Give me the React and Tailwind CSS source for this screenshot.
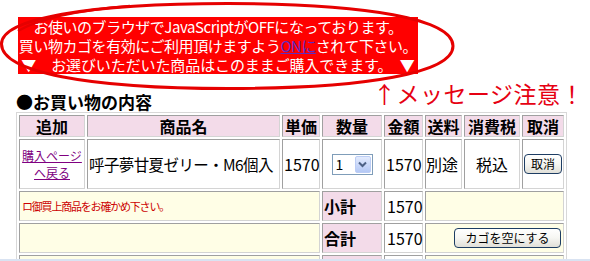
import React from "react";

const F = "font-['Noto_Sans_CJK_JP',sans-serif]";
const cell = "border border-t-[#a0a0a0] border-l-[#a0a0a0] border-r-[#d4d4d4] border-b-[#d4d4d4]";
const head = `${cell} bg-[#f3dbe9] font-bold text-[16px] leading-[20px] flex items-center justify-center whitespace-nowrap`;
const body = `${cell} bg-white text-[16px] leading-[20px] flex items-center whitespace-nowrap`;
const yellow = `${cell} bg-[#fffee6]`;

function XPButton({ children, className = "" }) {
  return (
    <button
      className={`border border-[#1d3d63] rounded-[4px] bg-linear-to-b from-white via-[#f6f6f2] to-[#e0dfd8] text-[12px] leading-[16px] text-black ${className}`}
    >
      {children}
    </button>
  );
}

export default function App() {
  return (
    <div className={`${F} relative w-[590px] h-[261px] overflow-hidden bg-white text-black flex flex-col`}>
      <div className="flex-1 overflow-hidden">
        {/* red notice */}
        <div className="mt-[17px] ml-[18px] w-[400px] h-[57px] bg-[#ff0000] text-white text-[15px] leading-[19px] text-center whitespace-nowrap tracking-[-0.45px]">
          <div>お使いのブラウザでJavaScriptがOFFになっております。</div>
          <div>
            買い物カゴを有効にご利用頂けますよう
            <span className="text-[#5e2bc4] underline">ONに</span>
            されて下さい。
          </div>
          <div className="tracking-[-0.1px]">▼　お選びいただいた商品はこのままご購入できます。　▼</div>
        </div>

        {/* heading row */}
        <div className="h-[38px] flex items-start justify-between pl-[16px] pr-[6px]">
          <div className="mt-[18px] text-[17px] leading-[20px] font-bold">●お買い物の内容</div>
          <div className="mt-[6px] text-[23px] leading-[26px] text-[#e60012] tracking-[0.5px]">↑メッセージ注意！</div>
        </div>

        {/* table */}
        <div className="ml-[16px] w-[551px] border border-[#d8d8d8] p-[2px]">
          <div className="grid grid-cols-[66px_193px_38px_60px_39px_37px_56px_42px] grid-rows-[22px_50px_30px_30px_30px] gap-[2px]">
            <div className={head}>追加</div>
            <div className={head}>商品名</div>
            <div className={head}>単価</div>
            <div className={head}>数量</div>
            <div className={head}>金額</div>
            <div className={head}>送料</div>
            <div className={head}>消費税</div>
            <div className={head}>取消</div>

            <div className={`${body} justify-center`}>
              <a className="text-[12px] leading-[17px] text-[#800080] underline text-center">
                購入ページ
                <br />
                へ戻る
              </a>
            </div>
            <div className={`${body} pl-[1px] text-[15.5px]! tracking-[-0.6px] overflow-hidden`}>呼子夢甘夏ゼリー・M6個入</div>
            <div className={`${body} pl-[1px]`}>1570</div>
            <div className={`${body} justify-center`}>
              <div className="w-[41px] h-[21px] border border-[#7f9db9] bg-white flex items-stretch">
                <div className="flex-1 text-[14px] leading-[19px] pl-[3px]">1</div>
                <div className="w-[16px] m-[1px] rounded-[2px] border border-[#bccdf5] bg-linear-to-b from-[#e3ebfd] to-[#b4c8f5] flex items-center justify-center">
                  <svg width="9" height="7" viewBox="0 0 9 7">
                    <path d="M1 1.5 L4.5 5 L8 1.5" fill="none" stroke="#4d6185" strokeWidth="2" />
                  </svg>
                </div>
              </div>
            </div>
            <div className={`${body} pl-[1px]`}>1570</div>
            <div className={`${body}`}>別途</div>
            <div className={`${body} justify-center`}>税込</div>
            <div className={`${body} justify-center`}>
              <XPButton className="w-[38px] h-[20px]">取消</XPButton>
            </div>

            <div className={`${yellow} col-span-3 flex items-center pl-[2px] text-[11px] leading-[14px] tracking-[-1.2px] text-[#cc0000] whitespace-nowrap`}>
              ロ御買上商品をお確かめ下さい。
            </div>
            <div className={`${head} justify-start! pl-[1px]`}>小計</div>
            <div className={`${body} pl-[2px]`}>1570</div>
            <div className={`${yellow} col-span-3`}></div>

            <div className={`${yellow} col-span-3`}></div>
            <div className={`${head} justify-start! pl-[1px]`}>合計</div>
            <div className={`${body} pl-[2px]`}>1570</div>
            <div className={`${yellow} col-span-3 flex items-center justify-end pr-[2px]`}>
              <XPButton className="w-[107px] h-[20px]">カゴを空にする</XPButton>
            </div>

            <div className={`${yellow} col-span-3`}></div>
            <div className={`${cell} bg-[#f3dbe9]`}></div>
            <div className={`${cell} bg-white`}></div>
            <div className={`${yellow} col-span-3`}></div>
          </div>
        </div>
      </div>
      <div className="h-[2px] bg-[#d9e3f2]"></div>

      {/* hand-drawn red ellipse over the notice */}
      <svg className="absolute left-0 top-0 pointer-events-none" width="590" height="100" viewBox="0 0 590 100">
        <path
          d="M1.5 44 C1.5 18.6 87.3 3.5 228 3.5 C368 3.5 453 19.3 453 46 C453 72.7 368 88.5 228 88.5 C87 88.5 1.5 71.9 1.5 44 Z"
          fill="none"
          stroke="#e60000"
          strokeWidth="3"
        />
        <path d="M18 31 C 40 18, 80 10, 130 6" fill="none" stroke="#e60000" strokeWidth="2.5" />
      </svg>
    </div>
  );
}
